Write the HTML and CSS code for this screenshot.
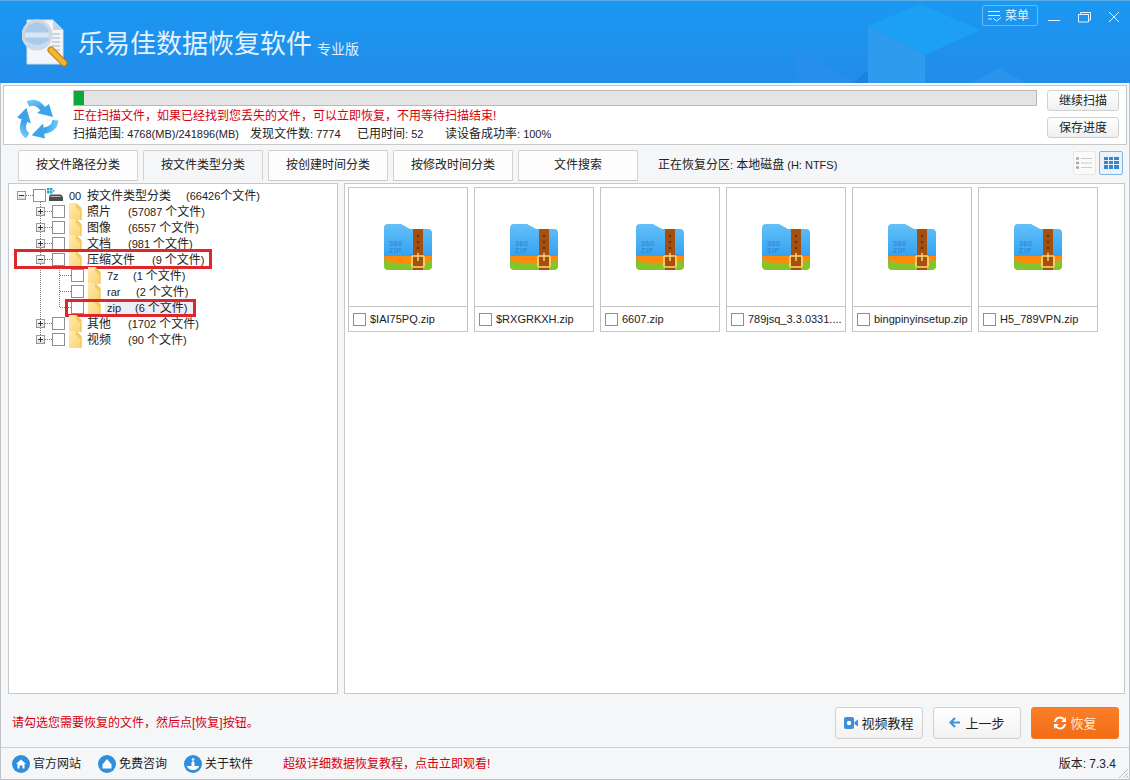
FILE: index.html
```html
<!DOCTYPE html>
<html lang="zh-CN">
<head>
<meta charset="utf-8">
<title>乐易佳数据恢复软件</title>
<link rel="stylesheet" href="styles.css">
</head>
<body>
<svg class="defs" width="0" height="0">
  <defs>
    <linearGradient id="zipblue" x1="0" y1="0" x2="0" y2="1"><stop offset="0" stop-color="#63c0f8"/><stop offset="1" stop-color="#2f9ef0"/></linearGradient>
    <linearGradient id="fold" x1="0" y1="0" x2="1" y2="1"><stop offset="0" stop-color="#ffeab0"/><stop offset="1" stop-color="#f9d370"/></linearGradient>
    <linearGradient id="rec" x1="0" y1="0" x2="1" y2="1"><stop offset="0" stop-color="#6cc4f4"/><stop offset="1" stop-color="#329ce6"/></linearGradient>
    <symbol id="folder" viewBox="0 0 13 17"><path d="M0 0H7L12.500 5V17H0Z" fill="url(#fold)"/><path d="M7 0 12.500 5V17H11V8L7 4Z" fill="#f5ca5c"/></symbol>
    <symbol id="zip" viewBox="0 0 48 46">
      <path d="M0 4Q0 0 4 0H17L26 5H44Q48 5 48 9V36H0Z" fill="url(#zipblue)"/>
      <path d="M0 36H48V42Q48 46 44 46H4Q0 46 0 42Z" fill="#84c52c"/>
      <path d="M0 32Q0 37 4 38L24 40 44 38Q48 37 48 32Z" fill="#ff8a0c"/>
      <rect x="29" y="5" width="10" height="41" fill="#a5500f"/>
      <circle cx="34" cy="12" r="1.300" fill="#6c3208"/><circle cx="34" cy="18" r="1.300" fill="#6c3208"/><circle cx="34" cy="24" r="1.300" fill="#6c3208"/>
      <rect x="28" y="32" width="12" height="11" rx="1" fill="none" stroke="#ffd778" stroke-width="1.600"/>
      <path d="M34 29V37" stroke="#ffd778" stroke-width="1.400"/>
      <text x="5" y="22" class="ziptxt">360</text>
      <text x="5" y="29" class="ziptxt">ZIP</text>
    </symbol>
    <symbol id="arrow" viewBox="0 0 42 44" overflow="visible">
      <path d="M12 7Q20 3 27 12" fill="none" stroke="url(#rec)" stroke-width="6"/>
      <path d="M21 16 33 7 37 20Z" fill="#3ea4ea"/>
    </symbol>
  </defs>
</svg>
<div class="window">
  <header class="titlebar">
    <svg class="hexes" viewBox="0 0 400 84" width="400" height="84" aria-hidden="true">
      <path d="M138 26 190 4 250 30 195 55Z" fill="#1ca0f4"/>
      <path d="M138 26 195 55V84H138Z" fill="#2f9bee"/>
      <path d="M66 48 122 82V84H66Z" fill="#278eeb"/>
      <path d="M122 84 138 70V84Z" fill="#1f80de"/>
      <path d="M240 84 268 68 298 84Z" fill="#2b94ec"/>
    </svg>
    <svg class="logo" width="46" height="48" viewBox="0 0 46 48" aria-hidden="true">
      <path d="M5 1H31L41 11V45H5Z" fill="#f2f5fa" stroke="#d5dde8"/>
      <path d="M31 1V11H41Z" fill="#c8d2e0"/>
      <path d="M29 15H38M30 19H38M30 23H38M30 27H38M31 31H38M33 35H38" stroke="#a8b2c0"/>
      <circle cx="15" cy="16" r="14" fill="#a9cbe9" stroke="#d4d7dd" stroke-width="3"/>
      <path d="M3 16H27" stroke="#e3eef8" stroke-width="5" opacity=".8"/>
      <path d="M3.500 23Q15 32 26.500 23" fill="none" stroke="#c6dcf0" stroke-width="3"/>
      <path d="M29 31 42 44" stroke="#b9790f" stroke-width="7" stroke-linecap="round"/>
      <path d="M29 31 42 44" stroke="#f6b530" stroke-width="5" stroke-linecap="round"/>
    </svg>
    <div class="brand">乐易佳数据恢复软件</div>
    <div class="edition">专业版</div>
    <div class="winctrls">
      <div class="menu-btn">
        <svg width="14" height="12" viewBox="0 0 14 12" aria-hidden="true"><path d="M0 1.500H12M0 5.500H12M0 9H4M5 8 8.500 11 13 7.500" fill="none" stroke="#e0f2ff"/></svg>
        <span>菜单</span>
      </div>
      <svg class="wbtn" width="14" height="14" viewBox="0 0 14 14" aria-hidden="true"><path d="M1 11.500H13" stroke="#e6f4ff"/></svg>
      <svg class="wbtn" width="14" height="14" viewBox="0 0 14 14" aria-hidden="true"><path d="M1.500 5.500H11.500V13H1.500ZM3.500 5V3.500H13.500V11H12" fill="none" stroke="#e6f4ff"/></svg>
      <svg class="wbtn" width="14" height="14" viewBox="0 0 14 14" aria-hidden="true"><path d="M2 3 12 13M12 3 2 13" stroke="#e6f4ff"/></svg>
    </div>
  </header>

  <section class="scan">
    <svg class="recycle" width="42" height="44" viewBox="0 0 42 44" aria-hidden="true">
      <use href="#arrow"/>
      <use href="#arrow" transform="rotate(120 21 23)"/>
      <use href="#arrow" transform="rotate(240 21 23)"/>
    </svg>
    <div class="scan-main">
      <div class="progress"><div class="progress-fill" style="width:10px"></div></div>
      <div class="scan-warn">正在扫描文件，如果已经找到您丢失的文件，可以立即恢复，不用等待扫描结束!</div>
      <div class="scan-stats"><span>扫描范围<span class="en">: 4768(MB)/241896(MB)</span></span><span>发现文件数<span class="en">: 7774</span></span><span>已用时间<span class="en">: 52</span></span><span>读设备成功率<span class="en">: 100%</span></span></div>
    </div>
    <div class="scan-btns">
      <button class="sbtn">继续扫描</button>
      <button class="sbtn">保存进度</button>
    </div>
  </section>

  <nav class="tabs">
    <div class="tab">按文件路径分类</div>
    <div class="tab active">按文件类型分类</div>
    <div class="tab">按创建时间分类</div>
    <div class="tab">按修改时间分类</div>
    <div class="tab">文件搜索</div>
    <div class="partition">正在恢复分区<span class="en">: </span>本地磁盘<span class="en"> (H: NTFS)</span></div>
    <div class="views">
      <div class="view">
        <svg width="17" height="12" viewBox="0 0 17 12" aria-hidden="true"><path d="M0 1.500H3M0 6H3M0 10.500H3" stroke="#aaa" stroke-width="2.500"/><path d="M5 1.500H16M5 6H16M5 10.500H16" stroke="#ccc"/></svg>
      </div>
      <div class="view on">
        <svg width="15" height="12" viewBox="0 0 15 12" aria-hidden="true"><path d="M0 0H4V3H0ZM5 0H9V3H5ZM10 0H15V3H10ZM0 4H4V7H0ZM5 4H9V7H5ZM10 4H15V7H10ZM0 8H4V12H0ZM5 8H9V12H5ZM10 8H15V12H10Z" fill="#3a86c8"/></svg>
      </div>
    </div>
  </nav>

  <main class="panes">
    <aside class="tree">
      <svg class="guides" width="100" height="170" aria-hidden="true">
        <g stroke="#777" stroke-dasharray="1 1" fill="none">
          <path d="M32.500 16V155.500"/>
          <path d="M18 11.500H25M37 27.500H44M37 43.500H44M37 59.500H44M37 75.500H44M37 139.500H44M37 155.500H44"/>
          <path d="M51.500 84V123.500M52 91.500H63M52 107.500H63M52 123.500H63"/>
        </g>
      </svg>
      <div class="row root">
        <span class="exp minus"></span><span class="cb"></span>
        <svg class="drive" width="16" height="14" viewBox="0 0 16 14" aria-hidden="true"><path d="M0 0H2.500V2.500H0ZM3 0H5.500V2.500H3ZM6 2H7.500V3.500H6ZM0 3H2.500V5.500H0ZM3 3H5.500V5.500H3Z" fill="#2aa6c8"/><path d="M3 6.500H14L16 9V13H2V9Z" fill="#4a4f52"/><path d="M3.500 8H13.500V9H3.500Z" fill="#b5b5b5"/></svg>
        <span class="l-00 en">00</span><span class="l-root">按文件类型分类</span><span><span class="en">(66426</span>个文件<span class="en">)</span></span>
      </div>
      <div class="row lv1"><span class="exp"></span><span class="cb"></span><svg class="fd" width="13" height="17" aria-hidden="true"><use href="#folder"/></svg><span class="l-short">照片</span><span><span class="en">(57087 </span>个文件<span class="en">)</span></span></div>
      <div class="row lv1"><span class="exp"></span><span class="cb"></span><svg class="fd" width="13" height="17" aria-hidden="true"><use href="#folder"/></svg><span class="l-short">图像</span><span><span class="en">(6557 </span>个文件<span class="en">)</span></span></div>
      <div class="row lv1"><span class="exp"></span><span class="cb"></span><svg class="fd" width="13" height="17" aria-hidden="true"><use href="#folder"/></svg><span class="l-short">文档</span><span><span class="en">(981 </span>个文件<span class="en">)</span></span></div>
      <div class="row lv1 marked-a"><span class="exp minus"></span><span class="cb"></span><svg class="fd" width="13" height="17" aria-hidden="true"><use href="#folder"/></svg><span class="l-long">压缩文件</span><span><span class="en">(9 </span>个文件<span class="en">)</span></span></div>
      <div class="row lv2"><span class="cb"></span><svg class="fd" width="13" height="17" aria-hidden="true"><use href="#folder"/></svg><span class="l-7z en">7z</span><span><span class="en">(1 </span>个文件<span class="en">)</span></span></div>
      <div class="row lv2"><span class="cb"></span><svg class="fd" width="13" height="17" aria-hidden="true"><use href="#folder"/></svg><span class="l-rar en">rar</span><span><span class="en">(2 </span>个文件<span class="en">)</span></span></div>
      <div class="row lv2 marked-b"><span class="cb"></span><svg class="fd" width="13" height="17" aria-hidden="true"><use href="#folder"/></svg><span class="l-zip en">zip</span><span><span class="en">(6 </span>个文件<span class="en">)</span></span></div>
      <div class="row lv1"><span class="exp"></span><span class="cb"></span><svg class="fd" width="13" height="17" aria-hidden="true"><use href="#folder"/></svg><span class="l-short">其他</span><span><span class="en">(1702 </span>个文件<span class="en">)</span></span></div>
      <div class="row lv1"><span class="exp"></span><span class="cb"></span><svg class="fd" width="13" height="17" aria-hidden="true"><use href="#folder"/></svg><span class="l-short">视频</span><span><span class="en">(90 </span>个文件<span class="en">)</span></span></div>
    </aside>
    <section class="grid">
      <article class="card"><div class="thumb"><svg width="48" height="46" aria-hidden="true"><use href="#zip"/></svg></div><div class="cap"><span class="cb"></span><span class="fname">$IAI75PQ.zip</span></div></article>
      <article class="card"><div class="thumb"><svg width="48" height="46" aria-hidden="true"><use href="#zip"/></svg></div><div class="cap"><span class="cb"></span><span class="fname">$RXGRKXH.zip</span></div></article>
      <article class="card"><div class="thumb"><svg width="48" height="46" aria-hidden="true"><use href="#zip"/></svg></div><div class="cap"><span class="cb"></span><span class="fname">6607.zip</span></div></article>
      <article class="card"><div class="thumb"><svg width="48" height="46" aria-hidden="true"><use href="#zip"/></svg></div><div class="cap"><span class="cb"></span><span class="fname">789jsq_3.3.0331....</span></div></article>
      <article class="card"><div class="thumb"><svg width="48" height="46" aria-hidden="true"><use href="#zip"/></svg></div><div class="cap"><span class="cb"></span><span class="fname">bingpinyinsetup.zip</span></div></article>
      <article class="card"><div class="thumb"><svg width="48" height="46" aria-hidden="true"><use href="#zip"/></svg></div><div class="cap"><span class="cb"></span><span class="fname">H5_789VPN.zip</span></div></article>
    </section>
  </main>

  <section class="actions">
    <div class="hint">请勾选您需要恢复的文件，然后点[恢复]按钮。</div>
    <button class="abtn">
      <svg width="14" height="12" viewBox="0 0 14 12" aria-hidden="true"><rect width="10" height="12" rx="2" fill="#3f8fd8"/><path d="M10.500 5 14 2.500V9.500L10.500 7Z" fill="#3f8fd8"/><circle cx="5" cy="6" r="2.200" fill="#fff"/></svg>
      视频教程
    </button>
    <button class="abtn">
      <svg class="back" width="11" height="11" viewBox="0 0 11 11" aria-hidden="true"><path d="M6 1 1.500 5.500 6 10M2 5.500H11" fill="none" stroke="#3f95de" stroke-width="2.200"/></svg>
      上一步
    </button>
    <button class="abtn primary">
      <svg width="14" height="14" viewBox="0 0 14 14" aria-hidden="true"><path d="M2 6A5 5 0 0 1 11 3.500M12 8A5 5 0 0 1 3 10.500" fill="none" stroke="#fff" stroke-width="2"/><path d="M13 1V6H8ZM1 13V8H6Z" fill="#fff"/></svg>
      恢复
    </button>
  </section>

  <footer class="statusbar">
    <div class="flink"><svg width="18" height="18" viewBox="0 0 18 18" aria-hidden="true"><circle cx="9" cy="9" r="9" fill="#2f8fdc"/><path d="M4 9 9 4.500 14 9H12.500V13.500H10.500V10.500H7.500V13.500H5.500V9Z" fill="#fff"/></svg>官方网站</div>
    <div class="flink"><svg width="18" height="18" viewBox="0 0 18 18" aria-hidden="true"><circle cx="9" cy="9" r="9" fill="#2f8fdc"/><path d="M9 4 13.500 9.500V13.500H4.500V9.500Z" fill="#fff"/></svg>免费咨询</div>
    <div class="flink"><svg width="18" height="18" viewBox="0 0 18 18" aria-hidden="true"><circle cx="9" cy="9" r="9" fill="#2f8fdc"/><circle cx="9" cy="4.500" r="1.300" fill="#fff"/><path d="M8 7H10V12H8ZM3.500 11Q4 14.500 9 14.500T14.500 11" fill="#fff" stroke="#fff"/></svg>关于软件</div>
    <div class="promo">超级详细数据恢复教程，点击立即观看!</div>
    <div class="version">版本: 7.3.4</div>
    <svg class="grip" width="11" height="11" viewBox="0 0 11 11" aria-hidden="true"><path d="M10 1 1 10M10 5 5 10M10 8 8 10" stroke="#bbb"/></svg>
  </footer>
</div>
</body>
</html>
```

FILE: styles.css
```css
*, *::before, *::after { box-sizing: border-box; }
html, body { margin: 0; padding: 0; }
body {
  width: 1130px;
  height: 780px;
  overflow: hidden;
  font: 12px/16px "Liberation Sans", "Noto Sans CJK SC", sans-serif;
  color: #222;
  background: #f5f6f8;
}
.defs { position: absolute; }
.ziptxt { font: 7px "Liberation Sans", sans-serif; letter-spacing: .6px; fill: #2b7ec8; }
.en { font-size: 11px; }
.window {
  width: 1130px;
  height: 780px;
  display: flex;
  flex-direction: column;
  border-left: 1px solid #bfc3c8;
  border-right: 1px solid #bfc3c8;
  border-bottom: 1px solid #bfc3c8;
}
button { font: inherit; color: inherit; cursor: default; }

/* title bar */
.titlebar {
  position: relative;
  height: 83px;
  flex: none;
  margin-left: -1px;
  margin-right: -1px;
  padding: 18px 0 0 22px;
  display: flex;
  align-items: flex-start;
  background: linear-gradient(#1a98f2, #228ce9);
  border-top: 1px solid #5aaee8;
  overflow: hidden;
}
.hexes { position: absolute; right: 0; top: -1px; }
.logo { flex: none; position: relative; }
.brand {
  position: relative;
  margin: 5px 0 0 10px;
  font-size: 26px;
  line-height: 36px;
  color: #e4f2ff;
  font-family: "Noto Sans CJK SC", sans-serif;
  font-weight: 400;
}
.edition { position: relative; margin: 20px 0 0 5px; font-size: 14px; line-height: 18px; color: #dff0ff; font-family: "Noto Sans CJK SC", sans-serif; }
.winctrls {
  position: absolute;
  top: 4px;
  right: 9px;
  display: flex;
  align-items: center;
  gap: 16px;
}
.menu-btn {
  width: 56px;
  height: 21px;
  border: 1px solid #6ab9f4;
  border-radius: 2px;
  display: flex;
  align-items: center;
  gap: 3px;
  padding-left: 5px;
  color: #e6f4ff;
  margin-right: -7px;
}
.wbtn { flex: none; }

/* scan panel */
.scan {
  height: 60px;
  flex: none;
  margin: 2px 2px 0 2px;
  background: #fff;
  border: 1px solid #c8c8c8;
  display: flex;
  padding: 4px 7px 0 12px;
}
.recycle { flex: none; margin-top: 7px; overflow: visible; }
.scan-main { width: 964px; margin-left: 15px; flex: none; }
.progress { height: 16px; background: #e4e4e4; border: 1px solid #bdb8b4; }
.progress-fill { height: 14px; background: #0aa83a; }
.scan-warn { margin-top: 1px; height: 18px; line-height: 18px; color: #d4000f; }
.scan-stats { display: grid; grid-template-columns: 177px 107px 88px auto; line-height: 18px; }
.scan-btns { margin-left: 10px; display: flex; flex-direction: column; gap: 6px; }
.sbtn {
  width: 72px;
  height: 21px;
  padding: 0;
  border: 1px solid #d0d0d0;
  border-radius: 3px;
  background: linear-gradient(#fff, #f0f0f0);
}

/* tabs */
.tabs {
  height: 32px;
  flex: none;
  margin-top: 5px;
  padding: 0 6px 0 17px;
  display: flex;
  gap: 5px;
}
.tab {
  width: 120px;
  height: 31px;
  background: #fdfdfd;
  border: 1px solid #d2d2d2;
  border-bottom: 1px solid #c8c8c8;
  border-radius: 2px 2px 0 0;
  text-align: center;
  line-height: 29px;
}
.tab.active { background: #f5f6f8; border-bottom-color: #f5f6f8; }
.partition { margin-left: 15px; line-height: 30px; }
.views { margin-left: auto; display: flex; gap: 3px; padding-top: 1px; }
.view {
  width: 23px;
  height: 24px;
  border: 1px solid #e8e8e8;
  border-radius: 2px;
  background: #fafafa;
  display: flex;
  align-items: center;
  justify-content: center;
}
.view.on { width: 24px; border-color: #7db8e6; background: #eaf3fb; }

/* panes */
.panes {
  height: 511px;
  flex: none;
  margin-top: 1px;
  padding: 0 4px 0 7px;
  display: flex;
  gap: 6px;
}
.tree {
  position: relative;
  width: 330px;
  flex: none;
  background: #fff;
  border: 1px solid #c8c8c8;
  padding-top: 3px;
}
.guides { position: absolute; left: -1px; top: 0; }
.row { position: relative; height: 16px; display: flex; align-items: center; white-space: nowrap; }
.row > span:not(.cb):not(.exp) { padding-top: 2px; }
.root { padding-left: 8px; }
.lv1 { padding-left: 27px; }
.lv2 { padding-left: 62px; }
.exp {
  position: relative;
  width: 9px;
  height: 9px;
  flex: none;
  border: 1px solid #999;
  background: linear-gradient(#fff, #ddd);
  margin-right: 7px;
}
.exp::before { content: ""; position: absolute; left: 1px; top: 3px; width: 5px; height: 1px; background: #333; }
.exp::after { content: ""; position: absolute; left: 3px; top: 1px; width: 1px; height: 5px; background: #333; }
.exp.minus::after { display: none; }
.cb {
  width: 13px;
  height: 13px;
  flex: none;
  border: 1px solid #8e8f8f;
  background: #fff;
}
.fd { flex: none; margin-left: 4px; }
.drive { flex: none; margin-left: 1px; }
.l-00 { margin-left: 6px; width: 18px; }
.l-root { width: 99px; }
.l-short { margin-left: 5px; width: 41px; }
.l-long { margin-left: 5px; width: 65px; }
.l-7z { margin-left: 6px; width: 26px; }
.l-rar { margin-left: 6px; width: 29px; }
.l-zip { margin-left: 6px; width: 28px; }
.marked-a::after {
  content: "";
  position: absolute;
  left: 5px;
  top: -2px;
  width: 198px;
  height: 20px;
  border: 3px solid #e0262b;
  pointer-events: none;
}
.marked-b { background: linear-gradient(#eeeef6, #eeeef6) 96px 0 / 88px 16px no-repeat; }
.marked-b::after {
  content: "";
  position: absolute;
  left: 56px;
  top: 0;
  width: 131px;
  height: 18px;
  border: 3px solid #e0262b;
  pointer-events: none;
}

.grid {
  flex: 1;
  background: #fff;
  border: 1px solid #c8c8c8;
  padding: 3px;
  display: flex;
  align-items: flex-start;
  gap: 6px;
}
.card { width: 120px; height: 145px; flex: none; border: 1px solid #c4c4c4; }
.thumb {
  height: 119px;
  border-bottom: 1px solid #c4c4c4;
  display: flex;
  align-items: center;
  justify-content: center;
}
.cap { height: 24px; display: flex; align-items: center; gap: 4px; padding-left: 4px; }
.fname { white-space: nowrap; font-size: 11px; }

/* actions */
.actions {
  height: 54px;
  flex: none;
  display: flex;
  align-items: center;
  gap: 10px;
  padding: 4px 10px 0 11px;
  border-bottom: 1px solid #cfcfcf;
}
.hint { color: #d4000f; margin-right: auto; }
.abtn {
  width: 88px;
  height: 32px;
  padding: 0;
  border: 1px solid #d0d0d0;
  border-radius: 3px;
  background: linear-gradient(#fff, #f2f2f2);
  font-size: 13px;
  font-family: "Noto Sans CJK SC", sans-serif;
  display: flex;
  align-items: center;
  justify-content: center;
  gap: 3px;
}
.back { margin-right: 2px; }
.primary { border-color: #f47a22; background: linear-gradient(#fb7f28, #f36c16); color: #ffe9d8; }

/* footer */
.statusbar {
  position: relative;
  flex: 1;
  display: flex;
  align-items: center;
  padding: 0 13px 0 11px;
}
.flink { display: flex; align-items: center; gap: 3px; width: 86px; }
.promo { margin-left: 13px; color: #d4000f; }
.version { margin-left: auto; }
.grip { position: absolute; right: 0; bottom: 0; }
```
